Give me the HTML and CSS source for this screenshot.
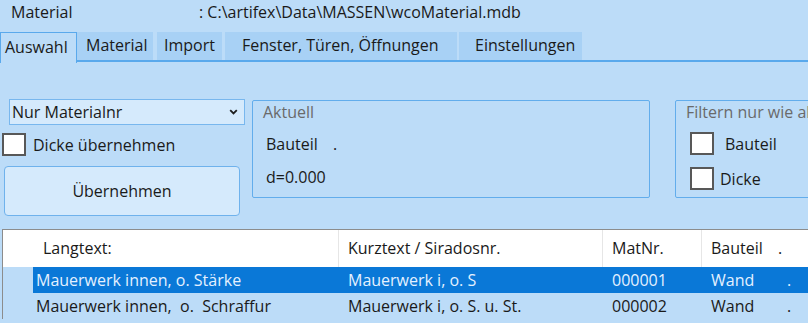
FILE: index.html
```html
<!DOCTYPE html>
<html lang="de">
<head>
    <meta charset="UTF-8">
    <title>Material</title>
    <link rel="stylesheet" href="styles.css">
</head>
<body>

<div class="title-row">
    <span class="title-label">Material</span>
    <span class="title-path">: C:\artifex\Data\MASSEN\wcoMaterial.mdb</span>
</div>

<div class="tabs">
    <div class="tab active">Auswahl</div>
    <div class="tab t-material">Material</div>
    <div class="tab t-import">Import</div>
    <div class="tab t-fenster">Fenster, Türen, Öffnungen</div>
    <div class="tab t-einst">Einstellungen</div>
</div>

<div class="panel">
    <div class="left-col">
        <div class="select">
            <span>Nur Materialnr</span>
            <svg class="arrow" width="9" height="6" viewBox="0 0 9 6"><path d="M1.2 1.2 L4.5 4.5 L7.8 1.2" fill="none" stroke="#1e1e1e" stroke-width="1.8"/></svg>
        </div>
        <label class="check">
            <span class="box"></span>
            <span>Dicke übernehmen</span>
        </label>
        <button class="apply">Übernehmen</button>
    </div>

    <div class="group current">
        <div class="legend">Aktuell</div>
        <div class="line">Bauteil <span class="gap-dot">.</span></div>
        <div class="line">d=0.000</div>
    </div>

    <div class="group filter">
        <div class="legend">Filtern nur wie aktuell</div>
        <label class="check first">
            <span class="box"></span>
            <span>Bauteil</span>
        </label>
        <label class="check second">
            <span class="box"></span>
            <span>Dicke</span>
        </label>
    </div>
</div>

<div class="grid">
    <div class="head ind"></div>
    <div class="head first">Langtext:</div>
    <div class="head">Kurztext / Siradosnr.</div>
    <div class="head">MatNr.</div>
    <div class="head last">Bauteil <span class="gap-dot">.</span></div>

    <div class="ind"></div>
    <div class="cell sel c1">Mauerwerk innen, o. Stärke</div>
    <div class="cell sel">Mauerwerk i, o. S</div>
    <div class="cell sel">000001</div>
    <div class="cell sel"><span class="part">Wand</span>.</div>

    <div class="ind"></div>
    <div class="cell c1">Mauerwerk innen, &nbsp;o. &nbsp;Schraffur</div>
    <div class="cell">Mauerwerk i, o. S. u. St.</div>
    <div class="cell">000002</div>
    <div class="cell"><span class="part">Wand</span>.</div>
</div>

</body>
</html>
```

FILE: styles.css
```css
body {
    margin: 0;
    width: 808px;
    height: 323px;
    overflow: hidden;
    font-family: 'Open Sans', 'Noto Sans', sans-serif;
    font-size: 16px;
    color: #1a1a1a;
    background-color: #bcdcf8;
}

/* title line */
.title-row {
    display: flex;
    height: 32px;
    line-height: 24px;
    padding-left: 11px;
    white-space: nowrap;
}

.title-label {
    width: 188px;
}

/* tab strip */
.tabs {
    display: flex;
    align-items: flex-start;
    height: 28px;
    border-bottom: 2px solid #5aa9ec;
    white-space: nowrap;
}

.tab {
    flex-shrink: 0;
    height: 28px;
    line-height: 27px;
    background-color: #a8d1f5;
}

.tab.active {
    width: 71px;
    height: 30px;
    padding-left: 4px;
    background-color: #bcdcf8;
    border: 1px solid #5aa9ec;
    border-bottom: none;
    line-height: 28px;
}

.t-material {
    width: 67px;
    padding-left: 9px;
}

.t-import {
    width: 58px;
    padding-left: 7px;
    margin-left: 4px;
}

.t-fenster {
    width: 215px;
    padding-left: 17px;
    margin-left: 3px;
}

.t-einst {
    width: 107px;
    padding-left: 16px;
    margin-left: 2px;
}

/* upper panel */
.panel {
    display: flex;
    align-items: flex-start;
    height: 130px;
    padding: 37px 0 0 2px;
}

.left-col {
    flex-shrink: 0;
    width: 243px;
    display: flex;
    flex-direction: column;
}

.select {
    display: flex;
    justify-content: space-between;
    align-items: center;
    box-sizing: border-box;
    margin-left: 7px;
    width: 236px;
    height: 26px;
    padding-left: 2px;
    background-color: #d5eafc;
    border: 1px solid #78b7ee;
}

.select .arrow {
    margin-right: 6px;
}

.check {
    display: flex;
    align-items: center;
    gap: 7px;
    margin-top: 8px;
    height: 23px;
}

.box {
    width: 20px;
    height: 19px;
    background-color: #ffffff;
    border: 2px solid #585858;
}

.apply {
    box-sizing: border-box;
    margin: 10px 0 0 2px;
    height: 50px;
    width: 236px;
    font: inherit;
    color: inherit;
    background-color: #d5eafc;
    border: 1px solid #6fb2ec;
    border-radius: 4px;
}

.group {
    flex-shrink: 0;
    box-sizing: border-box;
    margin-top: 1px;
    height: 98px;
    border: 1px solid #62adec;
    border-radius: 2px;
    white-space: nowrap;
    overflow: hidden;
}

.group.current {
    margin-left: 7px;
    width: 398px;
}

.group.filter {
    margin-left: 25px;
    width: 200px;
}

.legend {
    color: #6a6a6a;
    padding-left: 10px;
    line-height: 22px;
}

.current .line {
    padding-left: 13px;
    line-height: 33px;
}

.current .legend {
    margin-bottom: 5px;
}

.gap-dot {
    margin-left: 11px;
}

.filter .check {
    margin-left: 14px;
}

.filter .first {
    margin-top: 9px;
    gap: 11px;
}

.filter .second {
    margin-top: 12px;
    gap: 6px;
}

/* list */
.grid {
    display: grid;
    grid-template-columns: 30px 306px 264px 99px 120px;
    grid-template-rows: 37px 26px 26px;
    margin-left: 2px;
    border-top: 1px solid #8c8c8c;
    border-left: 1px solid #8c8c8c;
    white-space: nowrap;
}

.head {
    background-color: #ffffff;
    line-height: 36px;
    padding-left: 9px;
    border-right: 1px solid #e6e6e6;
}

.head.ind {
    border-right: none;
    padding: 0;
}

.head.first {
    padding-left: 10px;
}

.head.last {
    border-right: none;
}

.cell {
    line-height: 26px;
    padding-left: 9px;
}

.cell.c1 {
    padding-left: 3px;
}

.cell.sel {
    background-color: #0a78d7;
    color: #e4f1ff;
}

.part {
    display: inline-block;
    width: 76px;
}
```
